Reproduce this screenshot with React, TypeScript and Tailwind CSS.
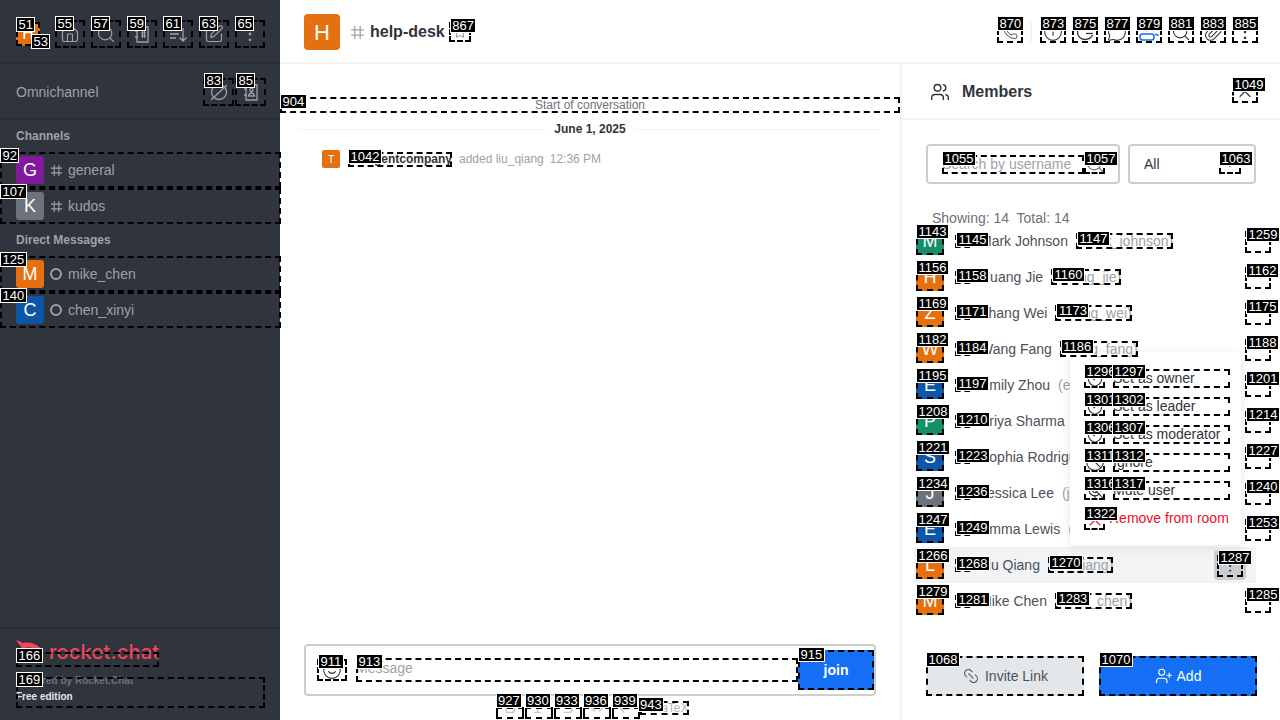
import type { ReactNode } from "react";
import {
  Ban,
  Bold,
  ChevronDown,
  ChevronUp,
  Code,
  CornerDownLeft,
  EllipsisVertical,
  Home,
  Info,
  Italic,
  Link2,
  MessageCircle,
  MicOff,
  Paperclip,
  Phone,
  Search,
  ShieldCheck,
  Smile,
  SquarePen,
  Star,
  Strikethrough,
  UserPlus,
  Users,
  X,
} from "lucide-react";

function Tag({ n, className = "" }: { n: number; className?: string }) {
  return (
    <span className={`absolute z-10 h-[15px] border border-white bg-black px-[1.5px] font-['Liberation_Sans',sans-serif] text-[13px] leading-[13px] font-normal whitespace-nowrap text-white ${className}`}>
      {n}
    </span>
  );
}

function Mark({ n, className = "", labelClass = "left-0 -top-[4px]", children }: { n: number; className?: string; labelClass?: string; children?: ReactNode }) {
  return (
    <div className={`relative ${className}`}>
      {children}
      <span className="pointer-events-none absolute inset-0 border-2 border-dashed border-black" />
      <Tag n={n} className={labelClass} />
    </div>
  );
}

function HashIcon({ className = "" }: { className?: string }) {
  return (
    <svg viewBox="0 0 14 14" className={className} fill="none" stroke="currentColor" strokeWidth="1.2">
      <path d="M4.5 1v12M9.5 1v12M1 4.500h12M1 9.500h12" />
    </svg>
  );
}

function DirectoryIcon() {
  return (
    <svg viewBox="0 0 20 20" className="h-5 w-5" fill="none" stroke="currentColor" strokeWidth="1.3">
      <path d="M5 3h11v15H5zM3 7h3M3 13h3" />
      <path d="M9 9h5M9 12h5M10.500 7v7M12.500 7v7" strokeWidth="1.100" />
    </svg>
  );
}

function SortIcon() {
  return (
    <svg viewBox="0 0 20 20" className="h-5 w-5" fill="none" stroke="currentColor" strokeWidth="1.3">
      <path d="M2 6h9M2 10h9M2 14h6M15 4v13M11.500 13.500 15 17l3.500-3.500" />
    </svg>
  );
}

function ContactIcon() {
  return (
    <svg viewBox="0 0 20 20" className="h-5 w-5" fill="none" stroke="currentColor" strokeWidth="1.3">
      <path d="M5 3h11v15H5zM3 7h3M3 13h3" />
      <circle cx="10.500" cy="8" r="1.600" />
      <path d="M7.500 14c.3-2 1.500-3 3-3s2.700 1 3 3z" />
    </svg>
  );
}

function ChatOffIcon() {
  return (
    <svg viewBox="0 0 20 20" className="h-5 w-5" fill="none" stroke="currentColor" strokeWidth="1.3">
      <circle cx="10" cy="10" r="7.500" />
      <path d="M2 18 18 3" />
    </svg>
  );
}

function DiscussionIcon() {
  return (
    <svg viewBox="0 0 20 20" className="h-5 w-5" fill="none" stroke="currentColor" strokeWidth="1.3">
      <path d="M17.500 13c-1.300 3-4 4.500-7.500 4.500-4.500 0-7.500-3.500-7.500-7.500S5.500 2.500 10 2.500" />
      <path d="M11 11.500h7" />
    </svg>
  );
}

function MembersIcon() {
  return (
    <svg viewBox="0 0 20 20" className="h-5 w-5 text-[#156ff5]" fill="none" stroke="currentColor" strokeWidth="1.5">
      <circle cx="8" cy="5" r="3.500" />
      <rect x="1" y="12" width="14" height="6" rx="2.500" />
      <path d="M16 12.500h1.500q1.500 0 1.500 1.500" />
    </svg>
  );
}

function RocketLogo() {
  return (
    <div className="flex h-6 items-center gap-[5px] text-[#f5455c]">
      <svg viewBox="0 0 28 24" className="h-6 w-[28px]" fill="currentColor">
        <path d="M0 0c2.500 1 5 1.500 6.500 3C14 1.500 23 4 27 12c-1 2-3 .5-5-1C17 7 11 6.500 6.500 9 5 6.500 2 3 0 0z" />
        <path d="M6 17c6 3 14 2.500 20-4-2 6-8 10-14 10-2-.5-4-3-6-6z" />
      </svg>
      <span className="font-['Inter',sans-serif] text-[20px] leading-6 font-medium tracking-[0.2px]">rocket.chat</span>
    </div>
  );
}

function SideRow({ n, letter, color, name, dm }: { n: number; letter: string; color: string; name: string; dm?: boolean }) {
  return (
    <Mark n={n} className="flex h-9 w-[281px] items-center pl-4">
      <div className={`flex h-7 w-7 items-center justify-center rounded-[3px] text-lg text-white ${color}`}>{letter}</div>
      {dm ? (
        <span className="ml-[6px] h-3 w-3 rounded-full border-2 border-[#9ea2a8]" />
      ) : (
        <HashIcon className="ml-[6px] h-[13px] w-[13px] text-[#9ea2a8]" />
      )}
      <span className={`text-sm text-[#9ea2a8] ${dm ? "ml-[6px]" : "ml-[5px]"}`}>{name}</span>
    </Mark>
  );
}

const members = [
  { a: 1143, s: 1145, u: 1147, k: 1259, letter: "M", color: "bg-[#158f69]", name: "Mark Johnson", user: "mark_johnson" },
  { a: 1156, s: 1158, u: 1160, k: 1162, letter: "H", color: "bg-[#e5700f]", name: "Huang Jie", user: "huang_jie" },
  { a: 1169, s: 1171, u: 1173, k: 1175, letter: "Z", color: "bg-[#e5700f]", name: "Zhang Wei", user: "zhang_wei" },
  { a: 1182, s: 1184, u: 1186, k: 1188, letter: "W", color: "bg-[#e5700f]", name: "Wang Fang", user: "wang_fang" },
  { a: 1195, s: 1197, k: 1201, letter: "E", color: "bg-[#0f55a5]", name: "Emily Zhou", user: "emily_zhou" },
  { a: 1208, s: 1210, k: 1214, letter: "P", color: "bg-[#158f69]", name: "Priya Sharma", user: "priya_sharma" },
  { a: 1221, s: 1223, k: 1227, letter: "S", color: "bg-[#0f55a5]", name: "Sophia Rodriguez", user: "sophia_rodriguez" },
  { a: 1234, s: 1236, k: 1240, letter: "J", color: "bg-[#6c727a]", name: "Jessica Lee", user: "jessica_lee" },
  { a: 1247, s: 1249, k: 1253, letter: "E", color: "bg-[#0f55a5]", name: "Emma Lewis", user: "emma_lewis" },
  { a: 1266, s: 1268, u: 1270, k: 1287, letter: "L", color: "bg-[#e5700f]", name: "Liu Qiang", user: "liu_qiang", active: true },
  { a: 1279, s: 1281, u: 1283, k: 1285, letter: "M", color: "bg-[#e5700f]", name: "Mike Chen", user: "mike_chen" },
];

const menuItems = [
  { i: 1296, t: 1297, icon: <ShieldCheck size={20} strokeWidth={1.4} />, label: "Set as owner" },
  { i: 1301, t: 1302, icon: <ShieldCheck size={20} strokeWidth={1.4} />, label: "Set as leader" },
  { i: 1306, t: 1307, icon: <ShieldCheck size={20} strokeWidth={1.4} />, label: "Set as moderator" },
  { i: 1311, t: 1312, icon: <Ban size={20} strokeWidth={1.4} />, label: "Ignore" },
  { i: 1316, t: 1317, icon: <MicOff size={20} strokeWidth={1.4} />, label: "Mute user" },
];

const topIcons = [
  { n: 55, icon: <Home size={20} strokeWidth={1.4} /> },
  { n: 57, icon: <Search size={20} strokeWidth={1.4} /> },
  { n: 59, icon: <DirectoryIcon /> },
  { n: 61, icon: <SortIcon /> },
  { n: 63, icon: <SquarePen size={20} strokeWidth={1.4} /> },
  { n: 65, icon: <EllipsisVertical size={20} strokeWidth={1.4} /> },
];

const headerIcons = [
  { n: 873, icon: <Info size={20} strokeWidth={1.3} /> },
  { n: 875, icon: <DiscussionIcon /> },
  { n: 877, icon: <MessageCircle size={20} strokeWidth={1.3} /> },
  { n: 879, icon: <MembersIcon /> },
  { n: 881, icon: <Search size={20} strokeWidth={1.3} /> },
  { n: 883, icon: <Paperclip size={20} strokeWidth={1.3} /> },
  { n: 885, icon: <EllipsisVertical size={20} strokeWidth={1.3} /> },
];

const formatIcons = [
  { n: 927, icon: <Bold size={16} /> },
  { n: 930, icon: <Italic size={16} /> },
  { n: 933, icon: <Strikethrough size={16} /> },
  { n: 936, icon: <Code size={16} /> },
  { n: 939, icon: <CornerDownLeft size={16} /> },
];

export default function App() {
  return (
    <div className="flex h-[720px] w-[1280px] overflow-hidden bg-white font-['Liberation_Sans',sans-serif] text-[#2f343d]">
      {/* Sidebar */}
      <aside className="flex h-full w-[280px] shrink-0 flex-col bg-[#2f343d]">
        <div className="flex h-16 shrink-0 items-center gap-2 border-b-2 border-[#2a2e36] pt-[6px] pl-4 text-[#9ea2a8]">
          <Mark n={51} className="h-6 w-6" labelClass="left-0 -top-[5px]">
            <div className="flex h-6 w-6 items-center justify-center rounded-[3px] bg-[#e5700f] text-[16px] text-white">H</div>
            <Tag n={53} className="top-3 left-[15px]" />
          </Mark>
          <div className="ml-[7px] flex gap-[6px]">
            {topIcons.map((t) => (
              <Mark key={t.n} n={t.n} className="flex h-7 w-[30px] items-center justify-center">
                {t.icon}
              </Mark>
            ))}
          </div>
        </div>

        <div className="flex h-14 shrink-0 items-center justify-between border-b-2 border-[#2a2e36] pt-[2px] pr-[14px] pl-4 text-sm text-[#9ea2a8]">
          <span>Omnichannel</span>
          <div className="flex gap-[1px]">
            <Mark n={83} className="flex h-7 w-[31px] items-center justify-center" labelClass="left-[1px] -top-[5px]">
              <ChatOffIcon />
            </Mark>
            <Mark n={85} className="flex h-7 w-[31px] items-center justify-center" labelClass="left-[1px] -top-[5px]">
              <ContactIcon />
            </Mark>
          </div>
        </div>

        <div className="px-4 py-[9px] text-xs leading-[14px] font-bold text-[#9ea2a8]">Channels</div>
        <SideRow n={92} letter="G" color="bg-[#7f1b9c]" name="general" />
        <SideRow n={107} letter="K" color="bg-[#6c727a]" name="kudos" />
        <div className="px-4 py-[9px] text-xs leading-[14px] font-bold text-[#9ea2a8]">Direct Messages</div>
        <SideRow n={125} letter="M" color="bg-[#e5700f]" name="mike_chen" dm />
        <SideRow n={140} letter="C" color="bg-[#0f55a5]" name="chen_xinyi" dm />

        <div className="mt-auto h-[93px] border-t-2 border-[#2a2e36] px-4 pt-[23px]">
          <Mark n={166} className="flex h-[15px] w-[143px] items-start">
            <div className="-mt-[12px]">
              <RocketLogo />
            </div>
          </Mark>
          <Mark n={169} className="mt-[10px] flex h-[31px] w-[249px] flex-col text-[10px] leading-4 font-bold" labelClass="left-0 -top-[5px]">
            <div className="-mt-[4px] text-[#6c727a]">Powered by Rocket.Chat</div>
            <div className="text-[#e4e7ea]">Free edition</div>
          </Mark>
        </div>
      </aside>

      {/* Main room */}
      <main className="flex min-w-0 flex-1 flex-col">
        <header className="flex h-16 shrink-0 items-center border-b-2 border-[#f2f3f5] pt-[2px] pr-[22px] pl-6">
          <div className="flex h-9 w-9 items-center justify-center rounded-[4px] bg-[#e5700f] text-[22px] text-white">H</div>
          <HashIcon className="ml-[10px] h-[15px] w-[15px] text-[#9ea2a8]" />
          <span className="ml-[5px] text-base font-bold">help-desk</span>
          <Mark n={867} className="ml-1 flex h-5 w-[22px] items-center justify-center text-[#6c727a]" labelClass="left-[1px] -top-[4px]">
            <Star size={14} strokeWidth={1.3} />
          </Mark>
          <div className="ml-auto flex items-center text-[#2f343d]">
            <Mark n={870} className="flex h-[22px] w-[26px] items-center justify-center" labelClass="left-0 -top-[5px]">
              <Phone size={16} strokeWidth={1.3} />
            </Mark>
            <div className="mx-[7px] h-5 w-[2px] bg-[#f2f3f5]" />
            <div className="ml-[1px] flex gap-[6px]">
              {headerIcons.map((h) => (
                <Mark key={h.n} n={h.n} className="flex h-[22px] w-[26px] items-center justify-center" labelClass="left-0 -top-[5px]">
                  {h.icon}
                </Mark>
              ))}
            </div>
          </div>
        </header>

        <div className="flex min-h-0 flex-1">
          {/* Messages */}
          <section className="flex min-w-0 flex-1 flex-col">
            <Mark n={904} className="mt-[33px] flex h-4 items-center justify-center text-xs text-[#6c727a]" labelClass="left-0 -top-[3px]">
              Start of conversation
            </Mark>
            <div className="mt-2 flex items-center px-5">
              <div className="h-px flex-1 bg-[#f2f3f5]" />
              <span className="px-2 text-xs font-bold">June 1, 2025</span>
              <div className="h-px flex-1 bg-[#f2f3f5]" />
            </div>
            <div className="mt-[13px] flex items-center pl-[42px] text-xs">
              <div className="flex h-[18px] w-[18px] items-center justify-center rounded-[2px] bg-[#e5700f] text-[11px] text-white">T</div>
              <Mark n={1042} className="ml-2 h-[15px] w-[104px] text-right leading-[15px] font-bold" labelClass="left-0 -top-[3px]">
                agentcompany
              </Mark>
              <span className="ml-[7px] text-[#9ea2a8]">added liu_qiang</span>
              <span className="ml-[6px] text-[#9ea2a8]">12:36 PM</span>
            </div>

            <div className="mt-auto px-6">
              <div className="flex h-[52px] items-center rounded-[4px] border-2 border-[#cbced1] pl-[11px]">
                <Mark n={911} className="flex h-[22px] w-[30px] items-center justify-center" labelClass="left-[1px] -top-[5px]">
                  <Smile size={20} strokeWidth={1.3} />
                </Mark>
                <Mark n={913} className="ml-[9px] flex h-6 flex-1 items-center pb-1 text-sm text-[#9ea2a8]">
                  Message
                </Mark>
                <Mark n={915} className="flex h-10 w-[76px] items-center justify-center rounded-[4px] bg-[#156ff5] text-sm font-bold text-white" labelClass="left-0 -top-[3px]">
                  join
                </Mark>
              </div>
              <div className="flex h-6 items-center justify-center pl-1 text-[#c4c7cc]">
                <div className="mt-[10px] flex gap-[1px]">
                  {formatIcons.map((f) => (
                    <Mark key={f.n} n={f.n} className="flex h-[12px] w-[28px] items-start justify-center" labelClass="left-0 -top-[14px]">
                      <span className="-mt-2">{f.icon}</span>
                    </Mark>
                  ))}
                </div>
                <Mark n={943} className="flex h-[14px] w-[49px] items-center justify-end text-xs text-[#b3b6bb]" labelClass="-left-[2px] -top-[4px]">
                  KaTeX
                </Mark>
              </div>
            </div>
          </section>

          {/* Members */}
          <section className="relative flex w-[380px] shrink-0 flex-col border-l-2 border-[#f2f3f5]">
            <div className="flex h-14 shrink-0 items-center border-b-2 border-[#f2f3f5] pt-[2px] pr-[22px] pl-7">
              <Users size={20} strokeWidth={1.7} />
              <span className="ml-3 text-base font-bold">Members</span>
              <Mark n={1049} className="ml-auto flex h-[21px] w-[26px] items-center justify-center" labelClass="left-0 -top-[5px]">
                <ChevronUp size={20} strokeWidth={1.3} className="mt-1" />
              </Mark>
            </div>

            <div className="mt-6 flex gap-2 px-6">
              <div className="flex h-10 w-[194px] items-center rounded-[4px] border-2 border-[#cbced1] pl-[14px]">
                <Mark n={1055} className="h-[19px] w-[142px] text-sm leading-[19px] text-[#9ea2a8]">
                  Search by username
                </Mark>
                <Mark n={1057} className="flex h-[19px] w-[21px] items-center justify-center text-[#6c727a]">
                  <Search size={20} strokeWidth={1.3} />
                </Mark>
              </div>
              <div className="flex h-10 flex-1 items-center justify-between rounded-[4px] border-2 border-[#cbced1] pr-[13px] pl-[14px] text-sm">
                All
                <Mark n={1063} className="flex h-[19px] w-[22px] items-center justify-center">
                  <ChevronDown size={16} />
                </Mark>
              </div>
            </div>

            <div className="mt-[26px] pl-[30px] text-sm leading-4 whitespace-pre text-[#6c727a]">Showing: 14  Total: 14</div>

            <div className="mt-[-3px] flex flex-col pr-6 pl-3">
              {members.map((m) => (
                <div key={m.a} className={`flex h-9 items-center pl-[2px] ${m.active ? "bg-[#f2f3f5]" : ""}`}>
                  <Mark n={m.a} className={`flex h-[27px] w-7 shrink-0 items-center justify-center rounded-[2px] text-lg text-white ${m.color}`}>
                    {m.letter}
                  </Mark>
                  <Mark n={m.s} className="ml-[11px] h-[13px] w-[15px] shrink-0" labelClass="left-[1px] -top-[3px]" />
                  <span className="ml-[10px] text-sm whitespace-nowrap text-[#4c5058]">{m.name}</span>
                  {m.u ? (
                    <Mark n={m.u} className={`ml-2 h-4 whitespace-nowrap text-sm leading-4 text-[#9ea2a8] ${m.u === 1186 ? "z-30" : ""}`} labelClass="left-[1px] -top-[2px]">
                      ({m.user})
                    </Mark>
                  ) : (
                    <span className="ml-2 text-sm whitespace-nowrap text-[#9ea2a8]">({m.user})</span>
                  )}
                  {m.active ? (
                    <div className="mr-[10px] ml-auto flex h-[30px] w-8 items-center justify-center rounded-[4px] bg-[#cbced1]">
                      <Mark n={m.k} className="mt-[2px] flex h-[22px] w-[26px] items-center justify-center" labelClass="left-[1px] -top-[5px]">
                        <EllipsisVertical size={16} strokeWidth={1.5} />
                      </Mark>
                    </div>
                  ) : (
                    <Mark n={m.k} className="mt-[2px] mr-[-15px] ml-auto h-[22px] w-[26px] shrink-0" labelClass="left-[1px] -top-[4px]" />
                  )}
                </div>
              ))}
            </div>

            <div className="mt-auto mb-6 flex gap-[15px] px-6">
              <Mark n={1068} className="flex h-10 w-[158px] shrink-0 items-center justify-center gap-[5px] rounded-[4px] bg-[#e4e7ea] text-sm text-[#4c5058]">
                <Link2 size={18} strokeWidth={1.4} className="rotate-45" />
                Invite Link
              </Mark>
              <Mark n={1070} className="flex h-10 w-[158px] shrink-0 items-center justify-center gap-1 rounded-[4px] bg-[#156ff5] text-sm text-white">
                <UserPlus size={18} strokeWidth={1.5} />
                Add
              </Mark>
            </div>

            {/* Row menu */}
            <div className="absolute top-[288px] left-[168px] z-20 flex h-[193px] w-[171px] flex-col rounded-[4px] bg-white pt-3 text-sm shadow-[0_2px_10px_rgba(47,52,61,0.12)]">
              {menuItems.map((item) => (
                <div key={item.i} className="flex h-7 items-center pl-[14px]">
                  <Mark n={item.i} className="flex h-[19px] w-[21px] items-center justify-center" labelClass="left-0 -top-[5px]">
                    {item.icon}
                  </Mark>
                  <Mark n={item.t} className="ml-2 h-[19px] w-[117px] leading-[19px]" labelClass="-left-[1px] -top-[5px]">
                    {item.label}
                  </Mark>
                </div>
              ))}
              <div className="flex h-7 items-center pl-[14px] text-[#ec0d2a]">
                <Mark n={1322} className="mt-1 flex h-[19px] w-[21px] items-center justify-center" labelClass="left-0 -top-[5px]">
                  <X size={20} strokeWidth={1.3} />
                </Mark>
                <span className="ml-1">Remove from room</span>
              </div>
            </div>
          </section>
        </div>
      </main>
    </div>
  );
}
